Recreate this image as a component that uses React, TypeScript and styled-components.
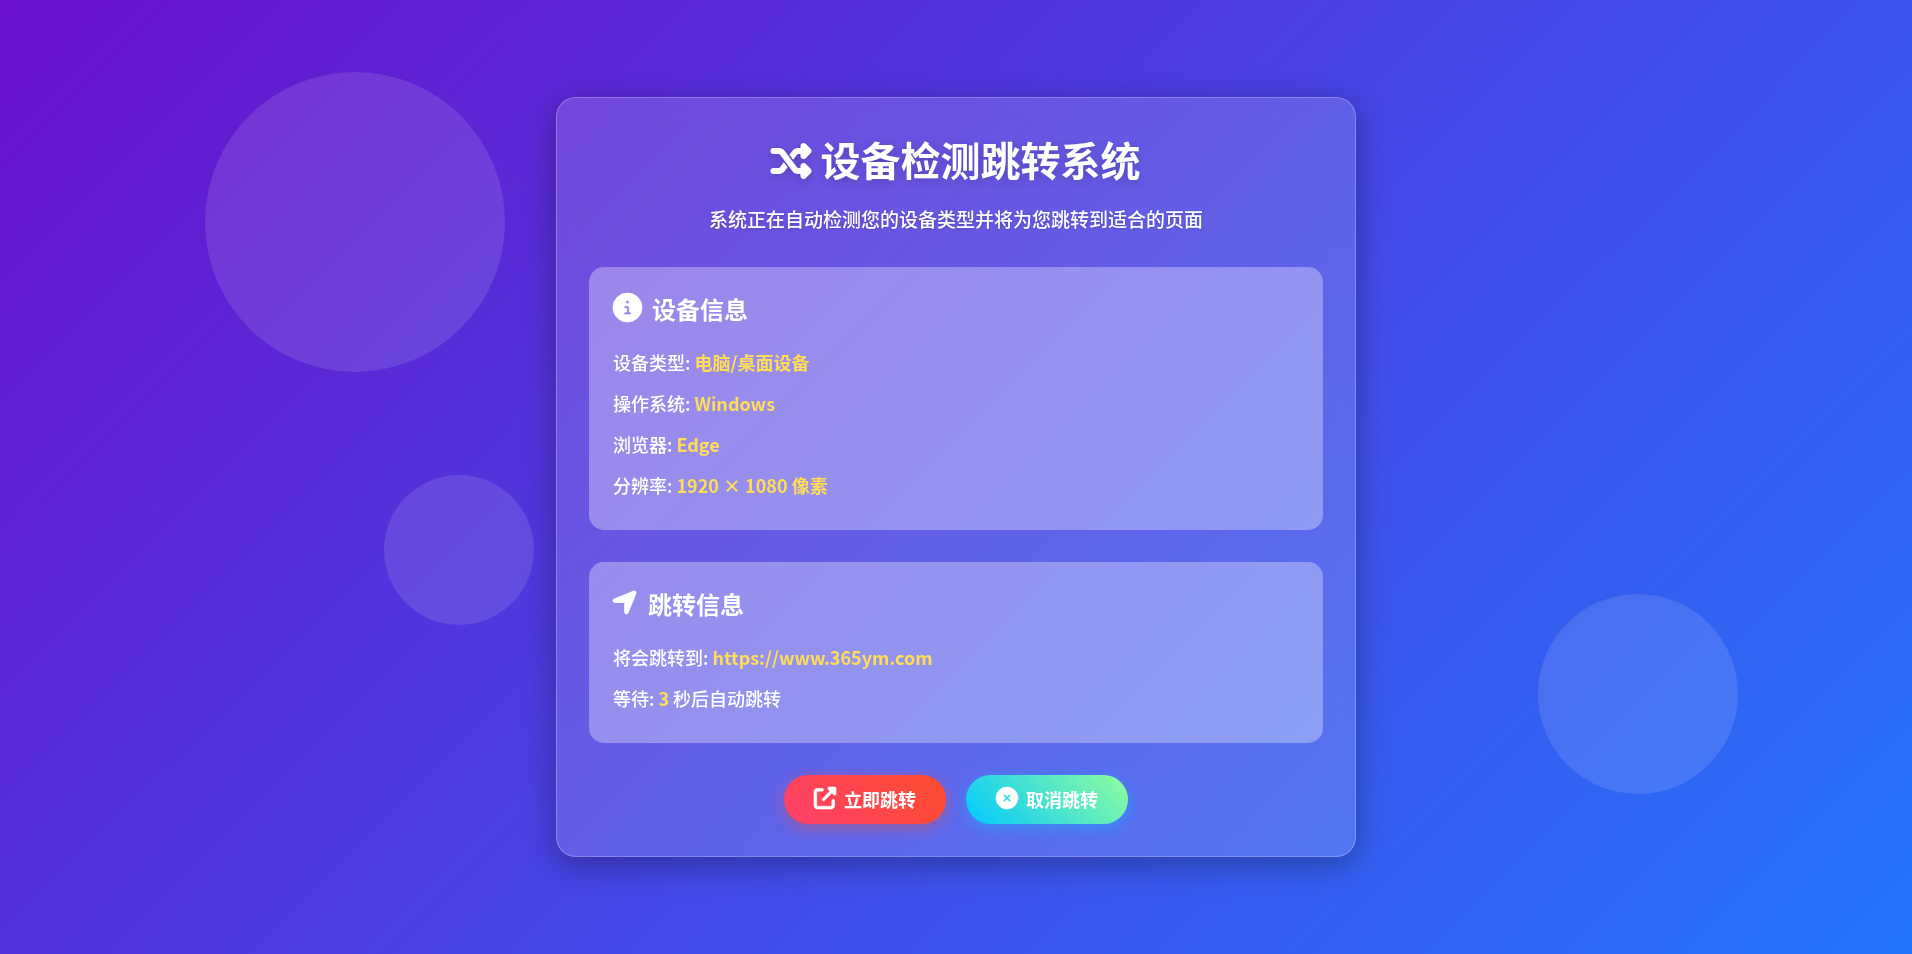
import React from "react";
import styled, { createGlobalStyle, css } from "styled-components";
import {
  FaCircleInfo,
  FaCircleXmark,
  FaLocationArrow,
  FaShuffle,
  FaUpRightFromSquare,
} from "react-icons/fa6";

const GlobalStyle = createGlobalStyle`
  * {
    box-sizing: border-box;
    margin: 0;
    padding: 0;
  }

  body {
    font-family: "Noto Sans CJK SC", sans-serif;
    color: #fff;
    background: #6a11cb;
  }
`;

const Page = styled.div`
  position: relative;
  display: flex;
  align-items: center;
  justify-content: center;
  min-height: 100vh;
  padding: 20px;
  overflow: hidden;
  background: linear-gradient(135deg, #6a11cb 0%, #2575fc 100%);
`;

const Bubble = styled.span<{ $size: number }>`
  position: absolute;
  width: ${({ $size }) => $size}px;
  height: ${({ $size }) => $size}px;
  border-radius: 50%;
  background: rgba(255, 255, 255, 0.11);
`;

const TopBubble = styled(Bubble)`
  top: 72px;
  left: 205px;
`;

const SideBubble = styled(Bubble)`
  top: 475px;
  left: 384px;
`;

const BottomBubble = styled(Bubble)`
  right: 174px;
  bottom: 160px;
`;

/* Icons are outlined in their own colour so they carry the weight of the bold text. */
const heavyIcon = css`
  overflow: visible;
  stroke: currentColor;
  stroke-width: 14px;
`;

const Panel = styled.main`
  position: relative;
  width: 100%;
  max-width: 800px;
  padding: 32px;
  border: 1px solid rgba(255, 255, 255, 0.25);
  border-radius: 20px;
  background: rgba(255, 255, 255, 0.15);
  box-shadow: 0 8px 32px rgba(0, 0, 0, 0.3);
  backdrop-filter: blur(10px);
`;

const Header = styled.header`
  margin-bottom: 33px;
  text-align: center;
`;

const Title = styled.h1`
  margin-bottom: 16px;
  font-size: 40px;
  line-height: 58px;
  font-weight: 700;
  text-shadow: 0 2px 10px rgba(0, 0, 0, 0.2);

  svg {
    ${heavyIcon}
    vertical-align: -5px;
    filter: drop-shadow(0 2px 5px rgba(0, 0, 0, 0.2));
  }
`;

const Subtitle = styled.p`
  font-size: 19px;
  line-height: 30px;
  font-weight: 500;
  text-shadow: 0 1px 3px rgba(0, 0, 0, 0.2);
`;

const Card = styled.section`
  margin-bottom: 32px;
  padding: 24px;
  border-radius: 15px;
  background: rgba(255, 255, 255, 0.32);
`;

const CardTitle = styled.h2<{ $iconWidth: number }>`
  margin-bottom: 16px;
  font-size: 24px;
  line-height: 35px;
  font-weight: 700;

  svg {
    ${heavyIcon}
    width: ${({ $iconWidth }) => $iconWidth}px;
    height: 29px;
    margin-right: 10px;
    vertical-align: -3px;
  }
`;

const Row = styled.p`
  padding: 8px 0;
  font-size: 18px;
  line-height: 25px;
  font-weight: 500;
`;

const Value = styled.strong`
  font-weight: 700;
  color: #ffdd57;
`;

const Actions = styled.div`
  display: flex;
  flex-wrap: wrap;
  justify-content: center;
  gap: 20px;
`;

const tones = {
  go: css`
    background: linear-gradient(45deg, #ff416c, #ff4b2b);
    box-shadow: 0 4px 15px rgba(255, 75, 43, 0.4);
  `,
  cancel: css`
    background: linear-gradient(45deg, #00c9ff, #92fe9d);
    box-shadow: 0 4px 15px rgba(0, 201, 255, 0.4);
  `,
};

const ActionButton = styled.button<{ $tone: keyof typeof tones }>`
  display: inline-flex;
  align-items: flex-start;
  gap: 8px;
  padding: 12px 30px;
  border: 0;
  border-radius: 50px;
  font-family: inherit;
  font-size: 18px;
  line-height: 25px;
  font-weight: 700;
  color: #fff;
  cursor: pointer;
  ${({ $tone }) => tones[$tone]}

  svg {
    ${heavyIcon}
    width: 22px;
    height: 22px;
  }
`;

const deviceRows = [
  { label: "设备类型", value: "电脑/桌面设备" },
  { label: "操作系统", value: "Windows" },
  { label: "浏览器", value: "Edge" },
  { label: "分辨率", value: "1920 × 1080 像素" },
];

export default function App() {
  return (
    <>
      <GlobalStyle />
      <Page lang="zh-CN">
        <TopBubble $size={300} />
        <SideBubble $size={150} />
        <BottomBubble $size={200} />
        <Panel>
          <Header>
            <Title>
              <FaShuffle aria-hidden /> 设备检测跳转系统
            </Title>
            <Subtitle>系统正在自动检测您的设备类型并将为您跳转到适合的页面</Subtitle>
          </Header>
          <Card>
            <CardTitle $iconWidth={29}>
              <FaCircleInfo aria-hidden />
              设备信息
            </CardTitle>
            {deviceRows.map(({ label, value }) => (
              <Row key={label}>
                {label}: <Value>{value}</Value>
              </Row>
            ))}
          </Card>
          <Card>
            <CardTitle $iconWidth={25}>
              <FaLocationArrow aria-hidden viewBox="16 0 448 512" />
              跳转信息
            </CardTitle>
            <Row>
              将会跳转到: <Value>https://www.365ym.com</Value>
            </Row>
            <Row>
              等待: <Value>3</Value> 秒后自动跳转
            </Row>
          </Card>
          <Actions>
            <ActionButton type="button" $tone="go">
              <FaUpRightFromSquare aria-hidden />
              立即跳转
            </ActionButton>
            <ActionButton type="button" $tone="cancel">
              <FaCircleXmark aria-hidden />
              取消跳转
            </ActionButton>
          </Actions>
        </Panel>
      </Page>
    </>
  );
}
